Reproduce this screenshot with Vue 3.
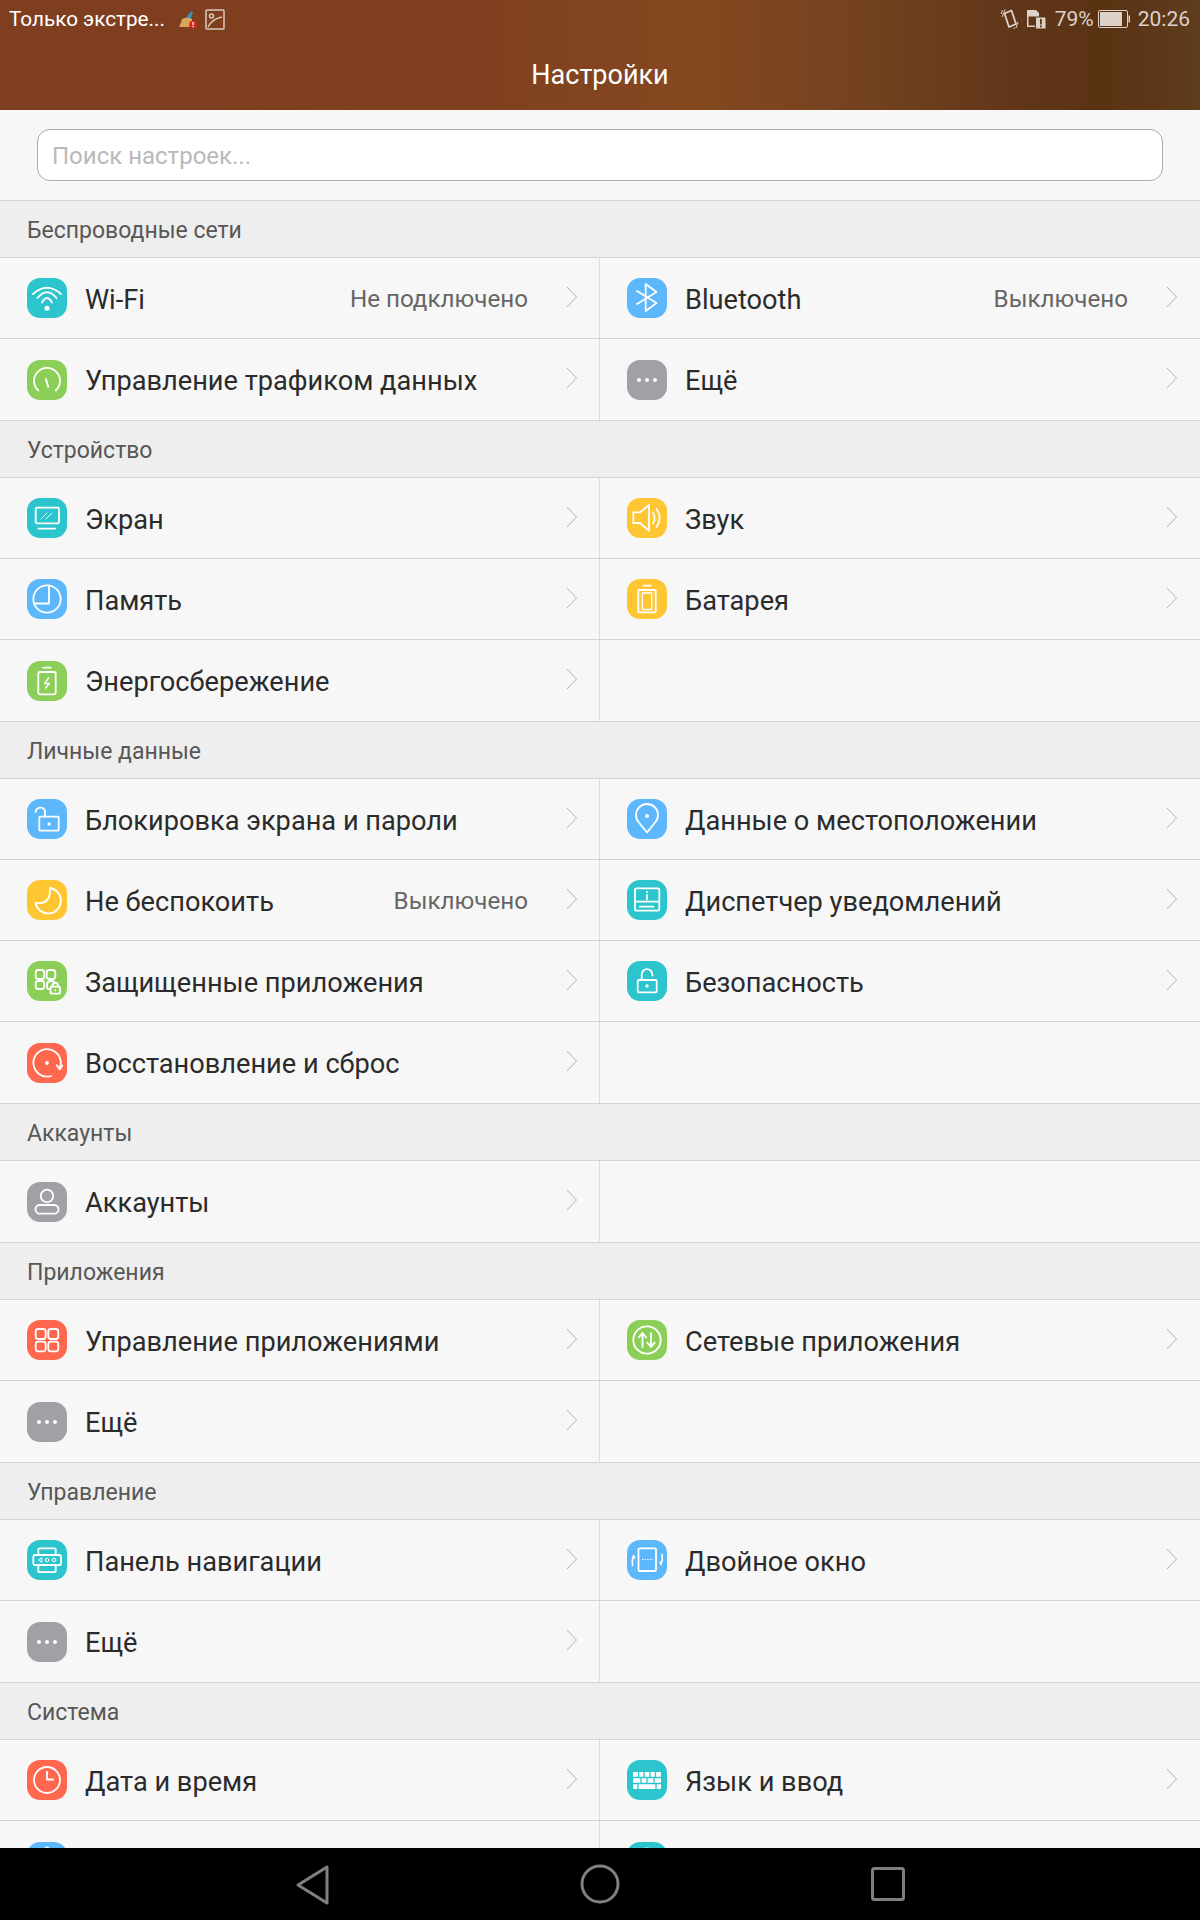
<template>
  <div class="screen">
    <header class="top-bar">
      <div class="status-row">
        <span class="carrier">Только экстре...</span>
        <svg class="st-broom" width="19" height="19" viewBox="0 0 19 19">
          <path d="M8 8 L13 1 L15 2.5 L12.5 9 Z" fill="#3f8fb5" />
          <path d="M4 9 Q9 6.5 14 9 L14 17 L1 17 Q3 13 4 9 Z" fill="#d6a65a" />
          <circle cx="15" cy="14.5" r="3.8" fill="#d8261c" />
          <rect x="14.4" y="12" width="1.3" height="3.2" fill="#fff" />
          <rect x="14.4" y="16" width="1.3" height="1.2" fill="#fff" />
        </svg>
        <svg class="st-pic" width="20" height="21" viewBox="0 0 20 21" fill="none" stroke="#dcc9bd" stroke-width="1.5">
          <rect x="1" y="1" width="18" height="19" rx="1" />
          <circle cx="6.5" cy="7" r="2" />
          <path d="M3 18 Q7 10 17 8" />
        </svg>
        <span class="status-spacer"></span>
        <svg class="st-vibrate" width="19" height="20" viewBox="0 0 19 20" fill="none" stroke="#dcd2ca" stroke-width="1.8" stroke-linejoin="round">
          <path d="M4.5 4.5 L11.5 1.5 L16 15 L9 18 Z" />
          <path d="M2.5 1 L1 5 M5 0.5 L2 8 M15 19 L13.5 19.5 M18 13 L16 19" stroke-width="1" />
        </svg>
        <svg class="st-sim" width="20" height="20" viewBox="0 0 20 20">
          <path d="M1 1 H10 L13 4 V7.5 H2.5 V16.5 H9 V18 H1 Z" fill="#dcd2ca" />
          <rect x="10" y="8.5" width="9.5" height="11" fill="#dcd2ca" />
          <rect x="14" y="10" width="1.8" height="5.5" fill="#5e3618" />
          <rect x="14" y="16.5" width="1.8" height="1.8" fill="#5e3618" />
        </svg>
        <span class="percent">79%</span>
        <svg class="st-batt" width="32" height="18" viewBox="0 0 32 18">
          <rect x="0.5" y="0.5" width="29" height="17" rx="1.5" fill="none" stroke="#dcd2ca" />
          <rect x="2" y="2" width="22" height="14" fill="#dcd2ca" />
          <rect x="30.5" y="5.5" width="1.5" height="7" fill="#dcd2ca" />
        </svg>
        <span class="clock">20:26</span>
      </div>
      <h1 class="page-title">Настройки</h1>
    </header>

    <div class="search-wrap">
      <div class="search-box">Поиск настроек...</div>
    </div>

    <main class="list">
      <section v-for="group in groups" :key="group.title" class="group">
        <div class="group-title">{{ group.title }}</div>
        <div class="group-grid">
          <div v-for="(item, i) in fill(group.items)" :key="i" class="cell">
            <template v-if="item">
              <span class="app-icon" :style="{ background: colors[item.color] }">
                <svg
                  width="40"
                  height="40"
                  viewBox="0 0 40 40"
                  fill="none"
                  stroke="#fff"
                  stroke-width="1.8"
                  stroke-linecap="round"
                  stroke-linejoin="round"
                  v-html="icons[item.icon]"
                ></svg>
              </span>
              <span class="cell-label">{{ item.label }}</span>
              <span v-if="item.value" class="cell-value">{{ item.value }}</span>
              <svg class="chevron" width="12" height="22" viewBox="0 0 12 22" fill="none" stroke="#b4b4b4" stroke-width="1">
                <path d="M1 1 L10.5 11 L1 21" />
              </svg>
            </template>
          </div>
        </div>
      </section>
    </main>

    <nav class="nav-bar">
      <svg class="nav-back" width="36" height="42" viewBox="0 0 36 42" fill="none" stroke="#808080" stroke-width="3" stroke-linejoin="round">
        <path d="M32 3 V39 L3 21 Z" />
      </svg>
      <svg class="nav-home" width="40" height="40" viewBox="0 0 40 40" fill="none" stroke="#808080" stroke-width="3">
        <circle cx="20" cy="20" r="18" />
      </svg>
      <svg class="nav-recent" width="34" height="34" viewBox="0 0 34 34" fill="none" stroke="#808080" stroke-width="3">
        <rect x="1.5" y="1.5" width="31" height="31" rx="2" />
      </svg>
    </nav>
  </div>
</template>

<script setup>
const colors = {
  teal: '#2cc5cd',
  blue: '#5cb7fb',
  green: '#8ccf58',
  gray: '#a0a1a7',
  yellow: '#ffc634',
  red: '#ff684e',
}

const dot = (x, y, r) => `<circle cx="${x}" cy="${y}" r="${r}" fill="#fff" stroke="none"/>`

const icons = {
  wifi: `<path d="M6 16 Q20 3.5 34 16"/><path d="M10.5 20 Q20 8.5 29.5 20"/><path d="M15 24.5 Q20 15.5 25 24.5"/>${dot(20, 30.3, 2.5)}`,
  bluetooth: '<path d="M10 13 L29.5 25 L18.7 33 V6 L29.5 14 L10 26"/>',
  gauge: '<path d="M11.3 30.5 A13 13 0 1 1 28.7 30.5"/><path d="M19 19.3 L21.2 26.7" stroke-width="2"/>',
  more: dot(12, 20, 2) + dot(20, 20, 2) + dot(28, 20, 2),
  screen: '<rect x="8.7" y="9.7" width="23.3" height="15.6" rx="1.5"/><path d="M11.5 30.7 H28"/><path d="M14 21 L20 15 M19 21 L25 15" stroke-width="0.9"/>',
  sound: '<path d="M6.3 14.3 H13 L22 7 V32.7 L13 25 H6.3 Z"/><path d="M26 14.5 Q29 20 26 25.5"/><path d="M29.5 11 Q36 20 29.5 29"/>',
  storage: '<circle cx="20" cy="20" r="13.7"/><path d="M22 6.5 V24.5 H7.5"/>',
  battery: '<path d="M16.3 6.7 H23.7"/><rect x="11.3" y="11" width="17.4" height="22.3" rx="1"/><rect x="15.3" y="14" width="9.4" height="16.5" stroke-width="1.4"/>',
  saver: '<path d="M16.3 6.7 H23.7"/><rect x="11.3" y="11" width="17.4" height="22.3" rx="1.5"/><path d="M21.5 17 L17.5 22.5 H22.5 L18.5 27" stroke-width="1.4"/>',
  lockOpen: `<path d="M8.7 13 A4.7 4.7 0 0 1 18 12.5 V17.7"/><rect x="12.3" y="17.7" width="19.4" height="14" rx="1"/>${dot(22, 25, 1.7)}`,
  pin: `<path d="M20 33.5 L11.5 23 A11 11 0 1 1 28.5 23 Z"/>${dot(20, 17, 2)}`,
  moon: '<path d="M23 8 A12.8 12.8 0 1 1 8.5 23 Q24 25 23 8 Z"/>',
  notify: `<rect x="8" y="8.3" width="24.3" height="22.4" rx="1.5"/><path d="M8.5 21.7 H32"/><path d="M13 26.7 H26.5"/><path d="M20 15 V19.5"/>${dot(20, 12, 1)}`,
  apps: `<rect x="8.7" y="9" width="8.6" height="9" rx="2.5"/><rect x="19.7" y="9" width="8.6" height="9" rx="2.5"/><rect x="8.7" y="20" width="8.6" height="8" rx="2.5"/><path d="M27 20.5 Q26 20 24 20 Q20 20 20 24 V26 Q20 28 22 28"/><rect x="23.5" y="25.7" width="9.5" height="7" rx="1"/><path d="M25.5 25.5 V24 A2.8 2.8 0 0 1 31 24 V25.5"/>${dot(28.2, 29.2, 1)}`,
  security: `<path d="M14.7 19 V13.5 A5.3 5.3 0 0 1 25.3 13.5 V14.5"/><rect x="10.7" y="19" width="19" height="12.3" rx="1"/>${dot(20, 25, 1.7)}`,
  reset: `<path d="M24 33 A13.7 13.7 0 1 1 33 24.5"/><path d="M29.8 22.3 L32.8 26.5 L35.3 22.5"/>${dot(20, 20, 1.9)}`,
  account: '<circle cx="20" cy="14" r="6.3"/><rect x="8.5" y="23" width="23" height="8.7" rx="4.3"/>',
  grid: '<rect x="8.7" y="9" width="10" height="10" rx="2.5"/><rect x="21.3" y="9" width="10" height="10" rx="2.5"/><rect x="8.7" y="21.7" width="10" height="9.6" rx="2.5"/><rect x="21.3" y="21.7" width="10" height="9.6" rx="2.5"/>',
  netapps: '<circle cx="20" cy="20" r="13.7"/><path d="M15.5 27 V13 L11.8 17.3 M15.5 13 L19.2 17.3"/><path d="M24 13 V27 L20.3 22.7 M24 27 L27.7 22.7"/>',
  navbar: '<rect x="11.3" y="8.3" width="17.4" height="6.7" rx="1"/><rect x="6.3" y="15" width="27.7" height="10.2" rx="2"/><rect x="11.3" y="25.2" width="17.4" height="7" rx="1"/><path d="M14.5 18 L11.5 20 L14.5 22 Z" stroke-width="1"/><circle cx="20" cy="20" r="1.8" stroke-width="1"/><circle cx="27" cy="20" r="1.8" stroke-width="1"/>',
  dual: '<rect x="11.5" y="8.3" width="17.5" height="22.7" rx="1"/><path d="M15 19.5 H26" stroke-dasharray="1.3 1.3" stroke-width="1.2" stroke-linecap="butt"/><path d="M5.5 25.5 Q4.5 20 6.5 15.5 L7.5 18" stroke-width="1.6"/><path d="M35 14.5 Q36 20 34 24.5 L33 22" stroke-width="1.6"/>',
  clock: '<circle cx="20" cy="20" r="13"/><path d="M20 12 V19.5 H26"/>',
  keyboard: '<rect x="6" y="12" width="28" height="17" rx="1" fill="#fff" stroke="none"/><path d="M6 17.5 H34 M6 23.5 H34 M11.5 12 V17.5 M17 12 V17.5 M23 12 V17.5 M28.5 12 V17.5 M14 17.5 V23.5 M20 17.5 V23.5 M27 17.5 V23.5 M11 23.5 V29 M29 23.5 V29" stroke="#2cc5cd" stroke-width="1.3" stroke-linecap="butt"/>',
  access: dot(20, 7, 2.6),
  info: '<circle cx="20" cy="20" r="13.5"/>',
}

const groups = [
  {
    title: 'Беспроводные сети',
    items: [
      { label: 'Wi-Fi', value: 'Не подключено', icon: 'wifi', color: 'teal' },
      { label: 'Bluetooth', value: 'Выключено', icon: 'bluetooth', color: 'blue' },
      { label: 'Управление трафиком данных', icon: 'gauge', color: 'green' },
      { label: 'Ещё', icon: 'more', color: 'gray' },
    ],
  },
  {
    title: 'Устройство',
    items: [
      { label: 'Экран', icon: 'screen', color: 'teal' },
      { label: 'Звук', icon: 'sound', color: 'yellow' },
      { label: 'Память', icon: 'storage', color: 'blue' },
      { label: 'Батарея', icon: 'battery', color: 'yellow' },
      { label: 'Энергосбережение', icon: 'saver', color: 'green' },
    ],
  },
  {
    title: 'Личные данные',
    items: [
      { label: 'Блокировка экрана и пароли', icon: 'lockOpen', color: 'blue' },
      { label: 'Данные о местоположении', icon: 'pin', color: 'blue' },
      { label: 'Не беспокоить', value: 'Выключено', icon: 'moon', color: 'yellow' },
      { label: 'Диспетчер уведомлений', icon: 'notify', color: 'teal' },
      { label: 'Защищенные приложения', icon: 'apps', color: 'green' },
      { label: 'Безопасность', icon: 'security', color: 'teal' },
      { label: 'Восстановление и сброс', icon: 'reset', color: 'red' },
    ],
  },
  {
    title: 'Аккаунты',
    items: [{ label: 'Аккаунты', icon: 'account', color: 'gray' }],
  },
  {
    title: 'Приложения',
    items: [
      { label: 'Управление приложениями', icon: 'grid', color: 'red' },
      { label: 'Сетевые приложения', icon: 'netapps', color: 'green' },
      { label: 'Ещё', icon: 'more', color: 'gray' },
    ],
  },
  {
    title: 'Управление',
    items: [
      { label: 'Панель навигации', icon: 'navbar', color: 'teal' },
      { label: 'Двойное окно', icon: 'dual', color: 'blue' },
      { label: 'Ещё', icon: 'more', color: 'gray' },
    ],
  },
  {
    title: 'Система',
    items: [
      { label: 'Дата и время', icon: 'clock', color: 'red' },
      { label: 'Язык и ввод', icon: 'keyboard', color: 'teal' },
      // last row sits under the nav bar, only the icon tops show
      { label: '', icon: 'access', color: 'blue' },
      { label: '', icon: 'info', color: 'teal' },
    ],
  },
]

// odd groups leave an empty cell on the right
const fill = (items) => (items.length % 2 ? [...items, null] : items)
</script>

<style>
html,
body {
  margin: 0;
  background: #000;
}
</style>

<style scoped>
.screen {
  width: 1200px;
  height: 1920px;
  display: flex;
  flex-direction: column;
  overflow: hidden;
  font-family: Roboto, "Noto Sans", sans-serif;
  background: #f7f7f7;
}
.top-bar {
  height: 110px;
  flex: none;
  box-sizing: border-box;
  background: linear-gradient(90deg, #7e3e1f 0%, #80401f 40%, #85481f 58%, #734220 72%, #5f3518 86%, #5a3313 92%, #5e3c1c 100%);
}
.status-row {
  height: 38px;
  display: flex;
  align-items: center;
  padding: 0 10px 0 9px;
}
.carrier {
  font-size: 20.7px;
  color: #fff;
  width: 169px;
  white-space: nowrap;
}
.st-pic { margin-left: 8px; }
.status-spacer { flex: 1; }
.st-sim { margin-left: 7px; }
.percent {
  font-size: 21px;
  color: #dcd2ca;
  margin-left: 9px;
}
.st-batt { margin-left: 4px; }
.clock {
  font-size: 21px;
  color: #dcd2ca;
  margin-left: 8px;
}
.page-title {
  margin: 0;
  font-size: 27px;
  font-weight: 400;
  line-height: 36px;
  text-align: center;
  color: #fff;
  margin-top: 19px;
}
.search-wrap {
  flex: none;
  height: 91px;
  box-sizing: border-box;
  padding: 19px 37px 0;
  border-bottom: 1px solid #d4d4d4;
}
.search-box {
  height: 52px;
  box-sizing: border-box;
  background: #fff;
  border: 1px solid #ababab;
  border-radius: 13px;
  padding-left: 14px;
  font-size: 24px;
  line-height: 52px;
  color: #b9b9b9;
}
.list {
  flex: 1;
  min-height: 0;
  overflow: hidden;
}
.group-title {
  height: 56px;
  box-sizing: content-box;
  border-bottom: 1px solid #d4d4d4;
  background: #eeeeee;
  padding-left: 27px;
  font-size: 23px;
  line-height: 59px;
  color: #575757;
}
.group-grid {
  display: grid;
  grid-template-columns: 600px 600px;
  border-bottom: 1px solid #d4d4d4;
}
.cell {
  height: 80px;
  display: flex;
  align-items: center;
  padding: 0 22px 0 27px;
  box-sizing: content-box;
  border-bottom: 1px solid #d4d4d4;
}
.cell:nth-child(odd) {
  border-right: 1px solid #dcdcdc;
  padding-right: 21px;
}
.cell:nth-last-child(-n + 2) {
  height: 81px;
  border-bottom: none;
}
.app-icon {
  width: 40px;
  height: 40px;
  flex: none;
  border-radius: 13px;
  display: block;
}
.app-icon svg { display: block; }
.cell-label {
  margin-left: 18px;
  margin-top: 3px;
  font-size: 27.2px;
  color: #2b2b2b;
  white-space: nowrap;
  flex: 1;
  min-width: 0;
}
.cell-value {
  font-size: 24.2px;
  color: #666;
  margin-top: 2px;
  margin-right: 38px;
  white-space: nowrap;
}
.chevron {
  flex: none;
  margin-top: -3px;
}
.nav-bar {
  flex: none;
  height: 72px;
  background: #000;
  position: relative;
}
.nav-back {
  position: absolute;
  left: 295px;
  top: 16px;
}
.nav-home {
  position: absolute;
  left: 580px;
  top: 16px;
}
.nav-recent {
  position: absolute;
  left: 871px;
  top: 19px;
}
</style>
